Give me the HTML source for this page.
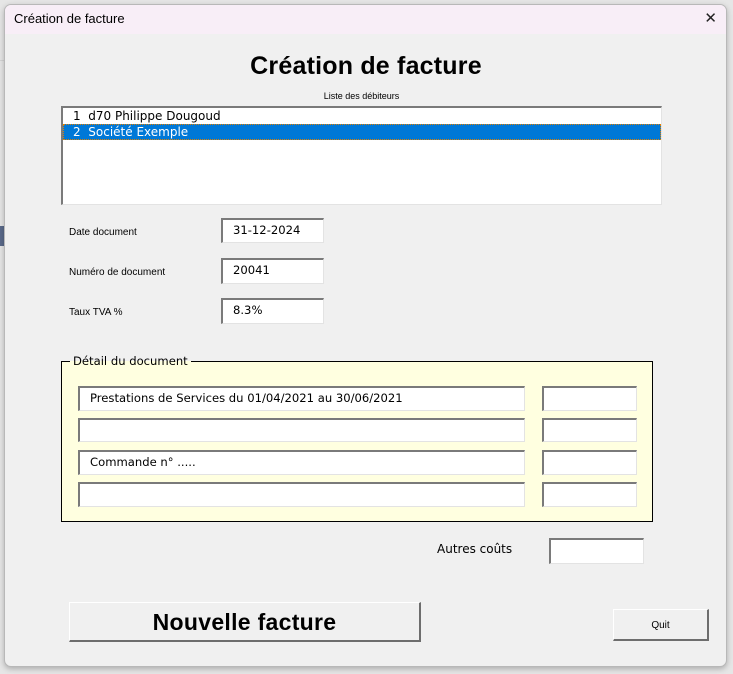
<!DOCTYPE html>
<html><head><meta charset="utf-8"><style>
*{box-sizing:border-box;margin:0;padding:0}
body{width:733px;height:674px;background:#e6e6e6;position:relative;overflow:hidden;font-family:"Liberation Sans",sans-serif}
.bgline{position:absolute;background:#d4d4d4}
.dlg{position:absolute;left:4px;top:4px;width:723px;height:663px;background:#f0f0f0;border:1px solid #b8b8b8;border-radius:7px;box-shadow:0 2px 6px rgba(0,0,0,.25);overflow:hidden}
.tb{position:absolute;left:0;top:0;width:100%;height:29px;background:#f8eef7;font-size:13px;line-height:27px;padding-left:9px;color:#000}
.x{position:absolute;right:9px;top:0;font-size:15px;font-family:"DejaVu Sans",sans-serif;font-weight:200;color:#222}
.a{position:absolute}
.in{position:absolute;background:#fff;border-top:2px solid #7a7a7a;border-left:2px solid #7a7a7a;border-right:1px solid #e3e3e3;border-bottom:1px solid #e3e3e3;font-family:"DejaVu Sans",sans-serif;font-size:11.6px;line-height:21px;padding-left:10px;color:#000}
.lbl{position:absolute;font-size:10px;color:#000}
.btn{position:absolute;background:#f0f0f0;border-top:1px solid #fff;border-left:1px solid #fff;border-right:2px solid #6d6d6d;border-bottom:2px solid #6d6d6d;text-align:center}
</style></head><body>
<div class="bgline" style="left:0;top:60px;width:5px;height:1px"></div>
<div class="bgline" style="left:0;top:226px;width:5px;height:20px;background:#5a6a8a"></div>
<div class="dlg">
<div class="tb">Création de facture<span class="x">✕</span></div>
<div class="a" style="left:0;top:47px;width:722px;text-align:center;font-size:25px;font-weight:bold;letter-spacing:0.2px">Création de facture</div>
<div class="lbl" style="left:0;top:86px;width:713px;text-align:center;font-size:9px">Liste des débiteurs</div>
<div class="in" style="left:56px;top:101px;width:601px;height:99px;padding:0;font-size:12px;line-height:16px">
<div style="padding-left:10px;height:16px">1&nbsp; d70 Philippe Dougoud</div>
<div style="padding-left:10px;height:16px;background:#0078d7;color:#fff;outline:1px dotted #e08000;outline-offset:-1px">2&nbsp; Société Exemple</div>
</div>
<div class="lbl" style="left:64px;top:222px">Date document</div>
<div class="lbl" style="left:64px;top:262px">Numéro de document</div>
<div class="lbl" style="left:64px;top:302px">Taux TVA %</div>
<div class="in" style="left:216px;top:213px;width:103px;height:25px">31-12-2024</div>
<div class="in" style="left:216px;top:253px;width:103px;height:26px">20041</div>
<div class="in" style="left:216px;top:293px;width:103px;height:26px">8.3%</div>
<div class="a" style="left:56px;top:356px;width:592px;height:161px;background:#ffffe0;border:1px solid #000"></div>
<div class="a" style="left:65px;top:348px;padding:0 3px;font-family:'DejaVu Sans',sans-serif;font-size:11.6px;line-height:16px;background:linear-gradient(#f0f0f0 50%,#ffffe0 50%)">Détail du document</div>
<div class="in" style="left:73px;top:381px;width:447px;height:25px">Prestations de Services du 01/04/2021 au 30/06/2021</div>
<div class="in" style="left:73px;top:413px;width:447px;height:24px"></div>
<div class="in" style="left:73px;top:445px;width:447px;height:25px">Commande n° .....</div>
<div class="in" style="left:73px;top:477px;width:447px;height:25px"></div>
<div class="in" style="left:537px;top:381px;width:95px;height:25px"></div>
<div class="in" style="left:537px;top:413px;width:95px;height:24px"></div>
<div class="in" style="left:537px;top:445px;width:95px;height:25px"></div>
<div class="in" style="left:537px;top:477px;width:95px;height:25px"></div>
<div class="a" style="left:432px;top:537px;font-family:'DejaVu Sans',sans-serif;font-size:12px">Autres coûts</div>
<div class="in" style="left:544px;top:533px;width:95px;height:26px"></div>
<div class="btn" style="left:64px;top:597px;width:352px;height:40px;font-size:23px;font-weight:bold;line-height:38px;letter-spacing:0.3px">Nouvelle facture</div>
<div class="btn" style="left:608px;top:604px;width:96px;height:32px;font-size:10px;line-height:32px">Quit</div>
</div>
</body></html>
